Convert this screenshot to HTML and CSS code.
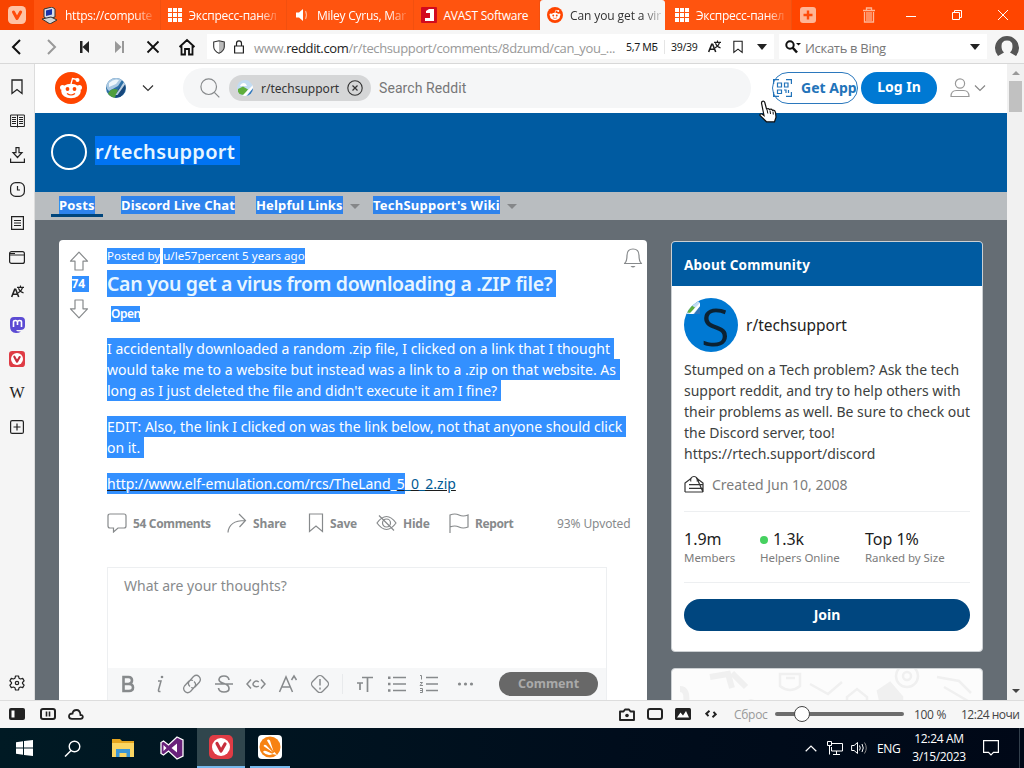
FILE: index.html
```
<!DOCTYPE html>
<html lang="en">
<head>
    <meta charset="utf-8" />
    <title>Can you get a virus from downloading a .ZIP file?</title>
    <link rel="stylesheet" href="styles.css">
</head>
<body>

<svg class="defs" width="0" height="0">
    <symbol id="grid" viewBox="0 0 14 14">
        <path d="M0 0h4v4H0zM5 0h4v4H5zM10 0h4v4h-4zM0 5h4v4H0zM5 5h4v4H5zM10 5h4v4h-4zM0 10h4v4H0zM5 10h4v4H5zM10 10h4v4h-4z" fill="#fff"/>
    </symbol>
    <symbol id="snoo" viewBox="0 0 32 32">
        <circle cx="16" cy="16" r="16" fill="#ff4500"/>
        <path d="M16 12l1.500-5.500 5 1" fill="none" stroke="#fff" stroke-width="1.300"/>
        <circle cx="22.500" cy="8" r="2" fill="#fff"/>
        <circle cx="7.500" cy="15.500" r="2.500" fill="#fff"/>
        <circle cx="24.500" cy="15.500" r="2.500" fill="#fff"/>
        <ellipse cx="16" cy="19" rx="9.800" ry="7.300" fill="#fff"/>
        <circle cx="12.500" cy="17" r="1.900" fill="#ff4500"/>
        <circle cx="19.500" cy="17" r="1.900" fill="#ff4500"/>
        <path d="M12 21.500q4 3 8 0" fill="none" stroke="#ff4500" stroke-width="1.200"/>
    </symbol>
    <symbol id="globe" viewBox="0 0 20 20">
        <circle cx="10" cy="10" r="10" fill="#2c6fa6"/>
        <path d="M.5 7A10 10 0 0 1 16 2L12 8 3 13Q0 11 .5 7z" fill="#a9c8e2"/>
        <path d="M3 5q5-5 10-3l-3 4-7 3z" fill="#eef6fb"/>
        <path d="M2 15.500Q6 9 12 12l-3 7.800Q4 19 2 15.500z" fill="#4f9e3d"/>
        <path d="M19 6q2 8-5 13l-5 .8L13 10z" fill="#17477c"/>
        <path d="M9.500 17L18 4l1 2.500L11.500 17z" fill="#e3eff8" opacity=".8"/>
    </symbol>
    <symbol id="broken" viewBox="0 0 16 16">
        <path d="M0 0h11l5 5v11H0z" fill="#c3dcf2"/>
        <path d="M3 6q1-3 4-3 2 0 3 3z" fill="#fff"/>
        <path d="M1 14V9l5-2.500 5 3L7 15z" fill="#5fae3c"/>
        <path d="M10 16l6-8v8z" fill="#2f76ba"/>
        <path d="M5 16L16 5v3L9 16z" fill="#fff"/>
    </symbol>
    <symbol id="translate" viewBox="0 0 14 14">
        <path d="M.7 13L4 4.500h1L8.300 13M2 10h5" fill="none" stroke="currentColor" stroke-width="1.700"/>
        <path d="M6.500 2.500H14M10.200.5v2M7.500 8.500Q11.500 6.500 12.500 2.500M8 3.500q1.500 4 5.500 5" fill="none" stroke="currentColor" stroke-width="1.200"/>
    </symbol>
    <symbol id="bookmark" viewBox="0 0 12 16">
        <path d="M1 1h10v13.500L6 10.500l-5 4z" fill="none" stroke="currentColor" stroke-width="1.300"/>
    </symbol>
    <symbol id="vivaldi" viewBox="0 0 24 24">
        <rect width="24" height="24" rx="5" fill="#df3c45"/>
        <circle cx="12" cy="12" r="9" fill="#fff"/>
        <path d="M8 8.500l4 7.500 4-7" fill="none" stroke="#c72e3c" stroke-width="3.200" stroke-linecap="round" stroke-linejoin="round"/>
    </symbol>
    <symbol id="chevron" viewBox="0 0 12 8">
        <path d="M1 1.500l5 5 5-5" fill="none" stroke="currentColor" stroke-width="1.200"/>
    </symbol>
    <symbol id="vote" viewBox="0 0 20 20">
        <path d="M10 1.200l8.500 9H14V19H6v-8.800H1.500z" fill="none" stroke="currentColor" stroke-width="1.200" stroke-linejoin="round"/>
    </symbol>
</svg>

<!-- browser tabs -->
<div class="tabbar">
    <div class="menu-btn">
        <svg width="18" height="18" viewBox="0 0 18 18"><rect width="18" height="18" rx="4.500" fill="#ffc3a4"/><path d="M5.500 6L9 12.500 12.600 6" fill="none" stroke="#ff4b0a" stroke-width="3" stroke-linecap="round" stroke-linejoin="round"/></svg>
    </div>
    <div class="tab">
        <svg width="17" height="17" viewBox="0 0 17 17"><path d="M3 2l8-2 3 2v8l-8 2-3-2z" fill="#d9dce8" stroke="#333" /><path d="M5 3.500l6-1.500v5.500L5 9z" fill="#1b33a8"/><path d="M1 12l9-2 6 3-7 4z" fill="#d5d5d5" stroke="#333"/></svg>
        <span>https://compute</span>
    </div>
    <div class="tab">
        <svg width="14" height="14"><use href="#grid"/></svg>
        <span>Экспресс-панел</span>
    </div>
    <div class="tab tab-audio">
        <svg width="14" height="14" viewBox="0 0 14 14"><path d="M1 4.500h3L8 1v12L4 9.500H1z" fill="#fff"/><path d="M10.500 3q2 4 0 8" fill="none" stroke="#ffb090" stroke-width="1.200"/></svg>
        <span>Miley Cyrus, Mar</span>
    </div>
    <div class="tab">
        <svg width="16" height="16" viewBox="0 0 16 16"><rect width="16" height="16" rx="1" fill="#d20a1e"/><path d="M5 4l3-2h5v12H9V6H5z" fill="#fff"/><path d="M4 11h6v3H4z" fill="#fff"/></svg>
        <span class="full">AVAST Software</span>
    </div>
    <div class="tab active">
        <svg width="16" height="16"><use href="#snoo"/></svg>
        <span>Can you get a vir</span>
    </div>
    <div class="tab tab-last">
        <svg width="14" height="14"><use href="#grid"/></svg>
        <span>Экспресс-панел</span>
    </div>
    <svg class="newtab" width="16" height="16" viewBox="0 0 16 16"><rect width="16" height="16" rx="3" fill="#ffb696"/><path d="M8 3.500v9M3.500 8h9" stroke="#ff4b0a" stroke-width="2.400"/></svg>
    <svg class="trash" width="14" height="16" viewBox="0 0 14 16"><path d="M1 3.500h12M4.500 3V1h5v2M2.500 5v10h9V5M5 5v9M7 5v9M9 5v9" fill="none" stroke="#ffb696" stroke-width="1.300"/></svg>
    <svg class="win-min" width="10" height="10" viewBox="0 0 10 10"><path d="M0 6.500h10" stroke="#fff"/></svg>
    <svg class="win-max" width="10" height="10" viewBox="0 0 10 10"><path d="M.5 2.500h7v7h-7zM2.500 2V.5h7v7H8" fill="none" stroke="#fff"/></svg>
    <svg class="win-close" width="10" height="10" viewBox="0 0 10 10"><path d="M0 0l10 10M10 0L0 10" stroke="#fff"/></svg>
</div>

<!-- address bar -->
<div class="toolbar">
    <div class="nav">
        <svg width="20" height="18" viewBox="0 0 20 18"><path d="M13 2L6 9l7 7" fill="none" stroke="#111" stroke-width="2"/></svg>
        <svg width="20" height="18" viewBox="0 0 20 18"><path d="M7 2l7 7-7 7" fill="none" stroke="#999" stroke-width="2"/></svg>
        <svg width="20" height="18" viewBox="0 0 20 18"><path d="M5 3h2.500v12H5zM14 3v12L7.500 9z" fill="#222"/></svg>
        <svg width="20" height="18" viewBox="0 0 20 18"><path d="M13 3h2v12h-2zM6 3v12l6.500-6z" fill="#999"/></svg>
        <svg width="20" height="18" viewBox="0 0 20 18"><path d="M4.500 3.500l11 11M15.500 3.500l-11 11" stroke="#111" stroke-width="1.800"/></svg>
        <svg width="20" height="18" viewBox="0 0 20 18"><path d="M2.500 9L10 2l7.500 7M4.500 8v8.500H8V11h4v5.500h3.500V8" fill="none" stroke="#111" stroke-width="1.800"/></svg>
    </div>
    <div class="url-field">
        <svg width="12" height="14" viewBox="0 0 12 14"><path d="M6 1v12q4-2 5-5V2.500z" fill="#bbb"/><path d="M.7 2L6 .7 11.300 2v5Q11 11 6 13.300 1 11 .7 7z" fill="none" stroke="#333" stroke-width="1.100"/></svg>
        <svg class="lock" width="10" height="14" viewBox="0 0 10 14"><path d="M.6 6h8.800v7H.6zM2.500 6V3.500q0-2.700 2.500-2.700T7.500 3.500V6" fill="none" stroke="#222" stroke-width="1.200"/></svg>
        <span class="url">www.<b>reddit.com</b>/r/techsupport/comments/8dzumd/can_you_...</span>
        <span class="size">5,7 МБ</span>
        <span class="count">39/39</span>
        <svg class="tr" width="13" height="13"><use href="#translate"/></svg>
        <svg class="bm" width="10" height="14"><use href="#bookmark"/></svg>
        <i class="caret"></i>
    </div>
    <div class="bing">
        <svg width="16" height="14" viewBox="0 0 16 14"><circle cx="5" cy="5" r="3.700" fill="none" stroke="#111" stroke-width="2"/><path d="M7.500 7.500l4.500 5" stroke="#111" stroke-width="2.600"/><path d="M11 3h5l-2.500 2.500z" fill="#111"/></svg>
        <span>Искать в Bing</span>
        <i class="caret"></i>
    </div>
    <svg class="profile" width="24" height="22" viewBox="0 0 24 22"><path d="M3 20A12 12 0 1 1 21 20L15 16.500q2.500-2 2.500-6.500 0-5.500-5.500-5.500T6.500 10q0 4.500 2.500 6.500z" fill="#555"/></svg>
</div>

<div class="main">
    <!-- side panel -->
    <div class="panel">
        <svg width="12" height="16"><use href="#bookmark"/></svg>
        <svg width="15" height="14" viewBox="0 0 15 14"><path d="M.6 1h13.800v11.500H.6zM7.500 1v12.500M2 3.500h4M2 5.500h4M2 7.500h4M2 9.500h4M9 3.500h4M9 5.500h4M9 7.500h4M9 9.500h4" fill="none" stroke="#222"/></svg>
        <svg width="15" height="16" viewBox="0 0 15 16"><path d="M6 .6h3v5h3L7.500 10.500 3 5.600h3zM.6 11.500v3.900h13.800v-3.900" fill="none" stroke="#222" stroke-width="1.200"/></svg>
        <svg width="15" height="15" viewBox="0 0 15 15"><rect x=".6" y=".6" width="13.800" height="13.800" rx="5" fill="none" stroke="#222" stroke-width="1.200"/><path d="M7.500 4v4H10" fill="none" stroke="#222" stroke-width="1.200"/></svg>
        <svg width="13" height="14" viewBox="0 0 13 14"><path d="M.6.6h11.800v12.800H.6zM3 4.500h7M3 7h7M3 9.500h7" fill="none" stroke="#222" stroke-width="1.200"/></svg>
        <svg width="16" height="13" viewBox="0 0 16 13"><rect x=".6" y=".6" width="14.800" height="11.800" rx="2" fill="none" stroke="#222" stroke-width="1.200"/><path d="M1 4h14M1 2.500h5" stroke="#222" stroke-width="1.200"/></svg>
        <svg width="13" height="13"><use href="#translate"/></svg>
        <svg width="15" height="16" viewBox="0 0 15 16"><path d="M4 0h7q4 0 4 4v5q0 4-5 4H6q1 2 5 1.500Q9 16 6 16 0 16 0 9V4q0-4 4-4z" fill="#5c4bd3"/><path d="M3.500 10V5q0-1.500 2-1.500t2 2V8M7.500 8V5.500q0-2 2-2t2 1.500v5" fill="none" stroke="#fff" stroke-width="1.600"/></svg>
        <svg width="16" height="16"><use href="#vivaldi"/></svg>
        <span class="wiki">W</span>
        <svg width="14" height="14" viewBox="0 0 14 14"><rect x=".6" y=".6" width="12.800" height="12.800" rx="1.500" fill="none" stroke="#222" stroke-width="1.200"/><path d="M7 3.500v7M3.500 7h7" stroke="#222" stroke-width="1.200"/></svg>
        <svg class="gear" width="16" height="16" viewBox="0 0 16 16"><path d="M6.500 1h3l.5 2.200 1.500.8 2.200-.6 1.400 2.500L13.500 7.500v1l1.600 1.600-1.400 2.500-2.200-.6-1.500.8-.5 2.200h-3L6 12.800 4.500 12l-2.200.6-1.400-2.500 1.600-1.600v-1L.9 5.900l1.400-2.500 2.200.6L6 3.200z" fill="none" stroke="#222" stroke-width="1.200" stroke-linejoin="round"/><circle cx="8" cy="8" r="1.700" fill="none" stroke="#222" stroke-width="1.200"/></svg>
    </div>

    <div class="page">
        <header class="site-header">
            <svg class="logo" width="32" height="32"><use href="#snoo"/></svg>
            <svg class="community" width="20" height="20"><use href="#globe"/></svg>
            <svg class="chev" width="12" height="8"><use href="#chevron"/></svg>
            <div class="search">
                <svg width="20" height="20" viewBox="0 0 20 20"><circle cx="8.700" cy="8.700" r="7.800" fill="none" stroke="#878a8c" stroke-width="1.200"/><path d="M14.300 14.300l5 5" stroke="#878a8c" stroke-width="1.200"/></svg>
                <div class="chip">
                    <svg width="16" height="16"><use href="#broken"/></svg>
                    <span>r/techsupport</span>
                    <svg width="16" height="16" viewBox="0 0 16 16"><circle cx="8" cy="8" r="7.200" fill="none" stroke="#333" stroke-width="1.100"/><path d="M5.500 5.500l5 5M10.500 5.500l-5 5" stroke="#333" stroke-width="1.200"/></svg>
                </div>
                <span class="placeholder">Search Reddit</span>
            </div>
            <div class="get-app">
                <svg width="19" height="18" viewBox="0 0 19 18"><path d="M.6 5V.6H6M13 .6h5.400V5M18.400 13v4.400H13M6 17.400H.6V13M4.500 4h4v4h-4zM11.500 4h3.500v4h-3.500zM4.500 11h4v3.500h-4zM11 11h2v3M15.500 11v3" fill="none" stroke="#2273b9" stroke-width="1.200"/></svg>
                <span>Get App</span>
            </div>
            <div class="login">Log In</div>
            <svg class="user" width="20" height="20" viewBox="0 0 20 20"><circle cx="10" cy="5.500" r="4.600" fill="none" stroke="#999" stroke-width="1.200"/><path d="M1 18.500q0-6 5.500-6h7q5.500 0 5.500 6z" fill="none" stroke="#999" stroke-width="1.200"/></svg>
            <svg class="user-chev" width="12" height="8"><use href="#chevron"/></svg>
        </header>

        <div class="banner">
            <div class="ring"></div>
            <h1>r/techsupport</h1>
        </div>

        <nav class="sub-nav">
            <a class="current"><span class="sel n1">Posts</span></a>
            <a><span class="sel n2">Discord Live Chat</span></a>
            <a class="drop"><span class="sel n3">Helpful Links</span><i></i></a>
            <a class="drop"><span class="sel n4">TechSupport's Wiki</span><i></i></a>
        </nav>

        <div class="content">
            <div class="post">
                <div class="votes">
                    <svg width="20" height="20"><use href="#vote"/></svg>
                    <span class="sel">74</span>
                    <svg class="down" width="20" height="20"><use href="#vote"/></svg>
                </div>
                <div class="post-body">
                    <div class="meta"><span class="sel">Posted by</span><span class="sel">u/le57percent 5 years ago</span></div>
                    <h2><span class="sel">Can you get a virus from downloading a .ZIP file?</span></h2>
                    <div class="flair"><span class="sel">Open</span></div>
                    <p>
                        <span class="sel line">I accidentally downloaded a random .zip file, I clicked on a link that I thought</span>
                        <span class="sel line">would take me to a website but instead was a link to a .zip on that website. As</span>
                        <span class="sel line">long as I just deleted the file and didn't execute it am I fine?</span>
                    </p>
                    <p>
                        <span class="sel line">EDIT: Also, the link I clicked on was the link below, not that anyone should click</span>
                        <span class="sel line">on it.</span>
                    </p>
                    <p class="link"><span class="sel">http://www.elf-emulation.com/rcs/TheLand_5</span><span class="rest">_0_2.zip</span></p>
                    <div class="actions">
                        <svg width="20" height="20" viewBox="0 0 20 20"><path d="M3 1h14q2 0 2 2v10q0 2-2 2h-6l-4.500 4V15H3q-2 0-2-2V3q0-2 2-2z" fill="none" stroke="#878a8c" stroke-width="1.200"/></svg>
                        <span class="a1">54 Comments</span>
                        <svg width="20" height="20" viewBox="0 0 20 20"><path d="M1 19.500Q2 7.500 18 7.500M12 1l6.500 6.500L12.500 14" fill="none" stroke="#878a8c" stroke-width="1.200"/></svg>
                        <span class="a2">Share</span>
                        <svg width="16" height="20" viewBox="0 0 16 20"><path d="M1.500 1h13v17.500L8 13l-6.500 5.500z" fill="none" stroke="#878a8c" stroke-width="1.200"/></svg>
                        <span class="a3">Save</span>
                        <svg width="21" height="18" viewBox="0 0 21 18"><path d="M1 9q9.500-13 19 0-9.500 13-19 0zM3 1.500l15 15" fill="none" stroke="#878a8c" stroke-width="1.200"/><circle cx="10.500" cy="9" r="4" fill="none" stroke="#878a8c" stroke-width="1.200"/></svg>
                        <span class="a4">Hide</span>
                        <svg width="20" height="20" viewBox="0 0 20 20"><path d="M1 20V2q5-2 9 0t9 0v12q-5 2-9 0t-9 0" fill="none" stroke="#878a8c" stroke-width="1.200"/></svg>
                        <span class="a5">Report</span>
                        <span class="upvoted">93% Upvoted</span>
                    </div>
                    <div class="editor">
                        <div class="editor-text">What are your thoughts?</div>
                        <div class="editor-bar">
                            <svg width="20" height="20" viewBox="0 0 20 20"><path d="M5.500 3h5q3.500 0 3.500 3.300T10.500 10h-5zM5.500 10H11q4 0 4 3.500T11 17H5.500z" fill="none" stroke="#878a8c" stroke-width="2.600"/></svg>
                            <svg width="20" height="20" viewBox="0 0 20 20"><path d="M8 7h3l-2.500 9q-.5 2 2 1.500" fill="none" stroke="#878a8c" stroke-width="1.500"/><circle cx="12" cy="3" r="1.300" fill="#878a8c"/></svg>
                            <svg width="20" height="20" viewBox="0 0 20 20"><path d="M8 12.500Q5 10 7.500 7l4-4.500q3-2.500 5.500 0t.5 5.500L13 13q-2 1.500-4 .5M12 7.500q3 2.500.5 5.500l-4 4.500q-3 2.500-5.500 0T2.500 12L7 7q2-1.500 4-.5" fill="none" stroke="#878a8c" stroke-width="1.300"/></svg>
                            <svg width="20" height="20" viewBox="0 0 20 20"><path d="M15 6q-.5-4-5-4T5 5.500Q5 8 10 9.500t5 5Q15 18 10 18t-5.500-4M1 10h18" fill="none" stroke="#878a8c" stroke-width="1.700"/></svg>
                            <svg width="20" height="20" viewBox="0 0 20 20"><path d="M5 5.500L1 10l4 4.500M15 5.500l4 4.500-4 4.500M12.800 8Q10 6 8 8.200t0 3.700 4.800.2" fill="none" stroke="#878a8c" stroke-width="1.500"/></svg>
                            <svg width="20" height="20" viewBox="0 0 20 20"><path d="M1.500 18L8 3l6.500 15M4 13h8M13.500 6L16 2l2.500 4" fill="none" stroke="#878a8c" stroke-width="1.500"/></svg>
                            <svg width="20" height="20" viewBox="0 0 20 20"><rect x="3" y="3" width="14" height="14" rx="3.500" transform="rotate(45 10 10)" fill="none" stroke="#878a8c" stroke-width="1.300"/><path d="M10 5v6.500M10 13.500v2" stroke="#878a8c" stroke-width="1.500"/></svg>
                            <i class="sep"></i>
                            <svg width="20" height="20" viewBox="0 0 20 20"><path d="M7 3.500h11M12.500 3.500V18M2 9h6M5 9v7" fill="none" stroke="#878a8c" stroke-width="1.700"/></svg>
                            <svg width="20" height="20" viewBox="0 0 20 20"><path d="M6 3.500h13M6 10h13M6 16.500h13" stroke="#878a8c" stroke-width="1.500"/><path d="M1 2.500h2.500v2.500H1zM1 8.800h2.500v2.500H1zM1 15.200h2.500v2.500H1z" fill="#878a8c"/></svg>
                            <svg width="20" height="20" viewBox="0 0 20 20"><path d="M7 3.500h12M7 10h12M7 16.500h12" stroke="#878a8c" stroke-width="1.500"/><path d="M1 1.500h1.500v4M1 8.500h2.500L1 11.500h3M1 14.500h2.500v4H1M1 16.500h2.500" fill="none" stroke="#878a8c"/></svg>
                            <svg class="dots" width="18" height="20" viewBox="0 0 18 20"><circle cx="2.500" cy="10" r="1.600" fill="#878a8c"/><circle cx="8.500" cy="10" r="1.600" fill="#878a8c"/><circle cx="14.500" cy="10" r="1.600" fill="#878a8c"/></svg>
                            <span class="comment-btn">Comment</span>
                        </div>
                    </div>
                </div>
                <svg class="bell" width="20" height="20" viewBox="0 0 20 20"><path d="M1.500 15.500q2.500-2 2.500-8Q4 1 10 1t6 6.500q0 6 2.500 8z" fill="none" stroke="#878a8c" stroke-width="1.200" stroke-linejoin="round"/><path d="M7.500 18h5q-2.500 3-5 0z" fill="#878a8c"/></svg>
            </div>

            <aside>
                <div class="about">
                    <div class="about-title">About Community</div>
                    <div class="about-body">
                        <div class="about-name">
                            <div class="avatar"><svg width="16" height="16"><use href="#broken"/></svg><span>S</span></div>
                            <span class="r-name">r/techsupport</span>
                        </div>
                        <div class="desc">Stumped on a Tech problem? Ask the tech<br>support reddit, and try to help others with<br>their problems as well. Be sure to check out<br>the Discord server, too!<br>https://rtech.support/discord</div>
                        <div class="created">
                            <svg width="20" height="18" viewBox="0 0 20 18"><path d="M1 17V8l6-4.500M13 3.500L19 8v9zM1 17h18M5 9.700h14M5 13.300h14" fill="none" stroke="#333" stroke-width="1.200"/><path d="M7 6.500A3.400 3.400 0 1 1 13 6.500" fill="none" stroke="#333" stroke-width="1.100"/></svg>
                            <span>Created Jun 10, 2008</span>
                        </div>
                        <div class="stats">
                            <div><b>1.9m</b><small>Members</small></div>
                            <div><b><i></i>1.3k</b><small>Helpers Online</small></div>
                            <div><b>Top 1%</b><small>Ranked by Size</small></div>
                        </div>
                        <div class="join">Join</div>
                    </div>
                </div>
                <div class="promo">
                    <svg width="310" height="40" viewBox="0 0 310 40" fill="none" stroke="#f0f0f0" stroke-width="2.500">
                        <path d="M38 8l18-3 4 14M60 4l14 14M8 20q8 0 6 14" stroke-width="6"/>
                        <path d="M108 5h20v12q-10 8-20 0zM114 9h9"/>
                        <path d="M138 15l18 10 14-12M175 38V28l10-8 10 8v10"/>
                        <path d="M206 22l12-8 12 14v12h-20z" fill="#f0f0f0"/>
                        <circle cx="235" cy="7" r="11"/><circle cx="235" cy="7" r="4"/>
                        <path d="M265 8l22 4 12 12M272 18l24 14M72 38q6-12 14-2"/>
                    </svg>
                </div>
            </aside>
        </div>
    </div>

    <div class="scrollbar">
        <i class="up"></i>
        <div class="thumb"></div>
        <i class="dn"></i>
    </div>
</div>

<div class="statusbar">
    <svg width="16" height="12" viewBox="0 0 16 12"><rect width="16" height="12" rx="2" fill="#222"/><path d="M2.500 2.500h3v7h-3z" fill="#fff"/></svg>
    <svg class="st2" width="16" height="12" viewBox="0 0 16 12"><rect x="1" y="1" width="14" height="10" rx="2" fill="none" stroke="#222" stroke-width="2"/><path d="M6.500 3.500v5M9.500 3.500v5" stroke="#222" stroke-width="1.600"/></svg>
    <svg class="st3" width="16" height="11" viewBox="0 0 16 11"><path d="M4 9.800h8.500q2.300 0 2.300-2T12.500 6Q12 1 8.500 1T4.500 4.500Q1 4.500 1 7.200 1 9.800 4 9.800z" fill="none" stroke="#222" stroke-width="1.800"/></svg>
    <svg class="st4" width="16" height="13" viewBox="0 0 16 13"><path d="M1 3.500h3.500L6 1.500h4l1.500 2H15V12H1z" fill="none" stroke="#222" stroke-width="1.900" stroke-linejoin="round"/><circle cx="8" cy="7.500" r="1.800" fill="#222"/></svg>
    <svg class="st5" width="16" height="12" viewBox="0 0 16 12"><rect x="1" y="1" width="14" height="10" rx="2" fill="none" stroke="#222" stroke-width="2"/></svg>
    <svg class="st5" width="16" height="12" viewBox="0 0 16 12"><rect width="16" height="12" rx="1.500" fill="#222"/><path d="M2 9.500l3.500-5 2.500 3L11 3l3 6.500z" fill="#fff"/></svg>
    <svg class="st6" width="12" height="8" viewBox="0 0 12 8"><path d="M4.500.7L1.300 3.700l2.200 2.400M7.500 7.300l3.200-3L8.500 1.900" fill="none" stroke="#222" stroke-width="1.900"/></svg>
    <span class="reset">Сброс</span>
    <div class="zoom"><i></i></div>
    <span class="pct">100 %</span>
    <span class="clock">12:24 ночи</span>
</div>

<div class="taskbar">
    <div class="task"><svg width="17" height="16" viewBox="0 0 17 16"><path d="M0 2.300L7 1.300v6.200H0zM8 1.100L17 0v7.500H8zM0 8.500h7v6.200l-7-1zM8 8.500h9V16l-9-1.100z" fill="#fff"/></svg></div>
    <div class="task find"><svg width="17" height="17" viewBox="0 0 17 17"><circle cx="10.500" cy="6.500" r="5.300" fill="none" stroke="#fff" stroke-width="1.400"/><path d="M7 10.500L1 16.500" stroke="#fff" stroke-width="1.500"/></svg></div>
    <div class="task"><svg width="22" height="18" viewBox="0 0 22 18"><path d="M0 0h8l2 2h12v16H0z" fill="#e5a51f"/><path d="M0 4h22v14H0z" fill="#fbd562"/><path d="M4 18v-8h14v8h-3.500v-4h-7v4z" fill="#3b96d6"/></svg></div>
    <div class="task"><svg width="24" height="24" viewBox="0 0 24 24"><path d="M17 1l6 3v16l-6 3-8.500-8L3.500 19 1 17.500v-11L3.500 5l5 4z" fill="#68217a" stroke="#fff" stroke-width="1.300"/><path d="M17 7.500v9L11.500 12zM3.500 9v6l3-3z" fill="#fff"/></svg></div>
    <div class="task on"><svg width="24" height="24"><use href="#vivaldi"/></svg></div>
    <div class="task open"><svg width="24" height="24" viewBox="0 0 24 24"><rect width="24" height="24" rx="4" fill="#fff"/><circle cx="12" cy="12" r="10.500" fill="#f78212"/><path d="M9 5.500q1-2 3 0l3.500 11zM5.500 11q1-2 3-.5l6.500 7zM5 17q1-2 3-1l7 3q-6 2.500-10-2z" fill="#fff"/><path d="M16.500 17l2.500 3-5-1z" fill="#fff"/></svg></div>
    <svg class="tray-up" width="12" height="7" viewBox="0 0 12 7"><path d="M.7 6.200L6 1l5.300 5.200" fill="none" stroke="#fff" stroke-width="1.200"/></svg>
    <svg class="net" width="16" height="14" viewBox="0 0 16 14"><path d="M5 2.500h10.500V10H4.500V6M9.500 10v3M6 13.500h7M.5.500h4v4h-4zM2.500 5v8.500" fill="none" stroke="#fff"/></svg>
    <svg class="vol" width="17" height="14" viewBox="0 0 17 14"><path d="M.6 4.500h2.500L6.500 1.500v11L3.100 9.500H.6z" fill="none" stroke="#fff"/><path d="M8.500 4.500q1.500 2.500 0 5M11 3q2.500 4 0 8" fill="none" stroke="#fff"/><path d="M13.500 1.500q3.500 5.500 0 11" fill="none" stroke="#888"/></svg>
    <span class="lang">ENG</span>
    <div class="datetime"><span>12:24 AM</span><span>3/15/2023</span></div>
    <svg class="notif" width="16" height="16" viewBox="0 0 16 16"><path d="M.6.6h14.800v11.800H10.500L8 15l-2.500-2.600H.6z" fill="none" stroke="#fff" stroke-width="1.200"/></svg>
    <i class="desktop"></i>
</div>

<!-- mouse pointer -->
<svg class="cursor" width="19" height="24" viewBox="0 0 19 24"><path d="M4 1.500q2-1 2.800 1L8.500 9q2-1 3 .5 2-.8 3 .8 2.500-.5 3 2l.5 5-1.500 4.500H8.500L2 15.500q-.5-2 2-1.500l2 1.500L3.500 3z" fill="#fff" stroke="#111" stroke-width="1.200"/><path d="M9 9.500l.8 4M12 10.500l.5 3.500M15 11.500l.3 3" stroke="#111"/></svg>

</body>
</html>
```
FILE: styles.css
```
* {
    margin: 0;
    padding: 0;
    box-sizing: border-box;
}

body {
    font-family: "Noto Sans", "Open Sans", sans-serif;
    width: 1024px;
    height: 768px;
    overflow: hidden;
    display: flex;
    flex-direction: column;
    white-space: nowrap;
    color: #1c1c1c;
}

svg {
    flex: none;
    display: block;
}

.defs {
    position: absolute;
}

/* tabs */
.tabbar {
    height: 30px;
    flex: none;
    background: #ff4500;
    display: flex;
    align-items: center;
    font-family: "Open Sans", sans-serif;
    font-size: 12px;
    letter-spacing: -.25px;
    color: #fff;
}

.menu-btn {
    width: 34px;
    height: 30px;
    padding: 6px 8px;
    background: #f84400;
}

.tab {
    width: 126.500px;
    flex: none;
    height: 30px;
    display: flex;
    align-items: center;
    gap: 7px;
    padding-left: 7px;
    background: #ff540f;
    border-right: 1px solid #f2500f;
}

.tab span {
    -webkit-mask-image: linear-gradient(90deg, #000 80%, rgba(0, 0, 0, .2));
    mask-image: linear-gradient(90deg, #000 80%, rgba(0, 0, 0, .2));
}

.tab .full {
    -webkit-mask-image: none;
    mask-image: none;
}

.tab-audio {
    padding-left: 8px;
    gap: 8px;
}

.tab.active {
    width: 125px;
    background: #f6f6f6;
    color: #333;
    border-radius: 3px 3px 0 0;
    border: 0;
    letter-spacing: -.1px;
}

.tab-last {
    padding-left: 10px;
}

.newtab {
    margin-left: 8px;
}

.trash {
    margin-left: 46px;
}

.win-min {
    margin-left: 30px;
}

.win-max {
    margin-left: 36px;
}

.win-close {
    margin-left: 36px;
}

/* address bar */
.toolbar {
    height: 34px;
    flex: none;
    background: #f6f6f6;
    border-bottom: 1px solid #d8d8d8;
    display: flex;
    align-items: center;
}

.nav {
    display: flex;
    gap: 14px;
    padding-left: 7px;
    width: 207px;
}

.url-field {
    width: 567px;
    height: 25px;
    background: #fff;
    display: flex;
    align-items: center;
    padding-left: 6px;
    font-size: 10.500px;
}

.lock {
    margin-left: 9px;
}

.url {
    font-family: "Open Sans", sans-serif;
    font-size: 13px;
    color: #999;
    width: 361px;
    margin-left: 10px;
    margin-top: 2px;
    letter-spacing: -.37px;
}

.url b {
    font-weight: 400;
    color: #222;
}

.size {
    margin-left: 11px;
    width: 38px;
    letter-spacing: -.3px;
}

.count {
    border-left: 1px solid #e5e5e5;
    padding-left: 6px;
    width: 38px;
    letter-spacing: -.3px;
}

.tr {
    margin-left: 6px;
}

.bm {
    margin-left: 12px;
}

.caret {
    border: 5px solid transparent;
    border-top: 6px solid #222;
    border-bottom: 0;
    margin-left: 14px;
}

.bing {
    width: 208px;
    height: 25px;
    margin-left: 5px;
    background: #fff;
    display: flex;
    align-items: center;
    padding: 0 7px 0 6px;
    font-family: "Open Sans", sans-serif;
    font-size: 13px;
    letter-spacing: -.3px;
    color: #777;
}

.bing span {
    margin-left: 4px;
    margin-top: 2px;
}

.bing .caret {
    margin-left: auto;
}

.profile {
    margin-left: 8px;
}

/* main area */
.main {
    height: 636px;
    flex: none;
    display: flex;
}

.panel {
    width: 35px;
    background: #f5f5f5;
    border-right: 1px solid #ddd;
    display: grid;
    grid-template-rows: repeat(11, 34px) 1fr;
    justify-items: center;
    align-items: center;
    padding-top: 6px;
    color: #222;
}

.panel .gear {
    align-self: end;
    margin-bottom: 9px;
}

.wiki {
    font: 16px "Liberation Serif", serif;
}

.page {
    width: 972px;
    overflow: hidden;
    background: #656d74;
}

.site-header {
    height: 49px;
    background: #fff;
    display: flex;
    align-items: center;
    padding: 0 0 1px 20px;
}

.community {
    margin-left: 19px;
}

.chev {
    margin-left: 16px;
    color: #333;
}

.search {
    width: 568px;
    height: 40px;
    margin-left: 29px;
    border-radius: 20px;
    background: #f5f6f7;
    display: flex;
    align-items: center;
    padding-left: 17px;
}

.chip {
    display: flex;
    align-items: center;
    height: 26px;
    width: 142px;
    margin-left: 9px;
    padding: 0 8px;
    border-radius: 13px;
    background: #d5d6d7;
    font-size: 12px;
    color: #333;
}

.chip svg:first-child {
    border-radius: 50%;
}

.chip span {
    margin: 0 8px;
    width: 78px;
}

.placeholder {
    font-family: Roboto, sans-serif;
    font-size: 14px;
    letter-spacing: .08px;
    color: #777;
    margin-left: 8px;
}

.get-app {
    width: 86px;
    height: 32px;
    margin-left: 21px;
    border: 1px solid #2b78bd;
    border-radius: 16px;
    display: flex;
    align-items: center;
    color: #2273b9;
    font-weight: 700;
    font-size: 14px;
}

.get-app span {
    margin: -2px 0 0 9px;
}

.login {
    width: 76px;
    height: 32px;
    line-height: 30px;
    margin-left: 3px;
    border-radius: 16px;
    background: #0079d3;
    color: #fff;
    font-weight: 700;
    font-size: 14px;
    text-align: center;
}

.user {
    margin-left: 13px;
}

.user-chev {
    margin-left: 4px;
    color: #888;
}

.banner {
    height: 79px;
    background: #005ba1;
    display: flex;
    align-items: center;
    padding: 0 0 1px 16px;
}

.ring {
    width: 36px;
    height: 36px;
    border: 2px solid #fff;
    border-radius: 50%;
}

.banner h1 {
    margin-left: 8px;
    margin-top: -3px;
    height: 29px;
    line-height: 31px;
    width: 145px;
    background: #0073f2;
    color: #e8f6ff;
    font-size: 20px;
    font-weight: 600;
    letter-spacing: .32px;
}

.sub-nav {
    height: 28px;
    background: #b9bdc0;
    display: flex;
    padding-left: 16px;
}

.sub-nav a {
    display: flex;
    height: 25px;
    padding: 4px 8px 0;
    margin-right: 10px;
    font-size: 13px;
    font-weight: 700;
}

.sub-nav a.current {
    border-bottom: 3px solid #00457c;
}

.sub-nav .drop {
    margin: 0 4px 0 -5px;
    padding-right: 0;
}

.sub-nav .drop + .drop {
    margin-left: 0;
}

.sub-nav .sel {
    height: 18px;
    line-height: 18px;
    background: #2e83ec;
}

.n1 {
    width: 36px;
    letter-spacing: .15px;
}

.n2 {
    width: 114px;
    letter-spacing: .12px;
}

.n3 {
    width: 87px;
    letter-spacing: .15px;
}

.n4 {
    width: 127px;
    letter-spacing: .23px;
}

.sub-nav i {
    border: 5px solid transparent;
    border-top: 5px solid #858789;
    margin: 8px 1px 0 7px;
    height: 0;
}

.sel {
    background: #3390ff;
    color: #fff;
}

.content {
    display: flex;
    align-items: flex-start;
    padding: 20px 0 0 24px;
    gap: 24px;
}

.post {
    width: 588px;
    height: 500px;
    background: #fff;
    border-radius: 4px 4px 0 0;
    position: relative;
    display: flex;
}

.votes {
    width: 48px;
    padding: 11px 8px 0 0;
    display: flex;
    flex-direction: column;
    align-items: center;
    color: #878a8c;
    margin-left: -1px;
}

.votes svg {
    margin-left: 1px;
}

.votes .sel {
    width: 17px;
    height: 16px;
    line-height: 16px;
    margin: 5px 0 7px 4px;
    font-size: 12px;
    font-weight: 700;
}

.down {
    transform: rotate(180deg);
}

.post-body {
    padding-left: 1px;
}

.bell {
    position: absolute;
    right: 4px;
    top: 8px;
}

.meta {
    margin-top: 8px;
    display: flex;
    gap: 3px;
    height: 16px;
    line-height: 16px;
    font-size: 11.500px;
    letter-spacing: .04px;
}

.post-body h2 {
    margin-top: 6px;
    height: 27px;
    line-height: 27px;
    font-size: 19.500px;
    font-weight: 600;
    letter-spacing: -.35px;
}

h2 .sel {
    display: inline-block;
    width: 449px;
    color: #e8f6ff;
}

.flair {
    margin: 9px 0 16px 4px;
    height: 16px;
    line-height: 16px;
    font-size: 12px;
    font-weight: 600;
    letter-spacing: -.5px;
}

.flair .sel {
    display: block;
    width: 29px;
}

.post-body p {
    font-size: 14px;
    line-height: 21px;
    margin-bottom: 15px;
}

.line {
    display: block;
    width: fit-content;
    padding-right: 4px;
}

p.link {
    display: flex;
    text-decoration: underline;
}

.link .rest {
    color: #005a94;
}

.actions {
    display: flex;
    align-items: center;
    height: 20px;
    margin-top: 19px;
    font-size: 12px;
    font-weight: 700;
    color: #878a8c;
}

.actions span {
    margin-left: 6px;
    flex: none;
}

.a1 {
    width: 94px;
    letter-spacing: -.35px;
}

.a2 {
    width: 55px;
    letter-spacing: -.1px;
}

.a3 {
    width: 46px;
    letter-spacing: -.2px;
}

.a4 {
    width: 46px;
    letter-spacing: -.2px;
}

.actions .a5 {
    width: 76px;
    letter-spacing: -.4px;
}

.actions .upvoted {
    font-weight: 400;
    letter-spacing: -.1px;
}

.editor {
    width: 500px;
    height: 160px;
    margin-top: 34px;
    border: 1px solid #edeff1;
}

.editor-text {
    height: 100px;
    padding: 8px 16px;
    font-size: 14px;
    color: #878a8c;
}

.editor-bar {
    height: 58px;
    padding: 6px 8px 0 10px;
    background: #f6f7f8;
    display: flex;
    gap: 12px;
}

.sep {
    width: 1px;
    height: 20px;
    background: #e8eaec;
}

.dots {
    margin-left: 6px;
}

.comment-btn {
    width: 99px;
    height: 24px;
    line-height: 23px;
    margin: -2px 0 0 auto;
    border-radius: 12px;
    background: #686868;
    color: #aaa;
    font-size: 12.500px;
    font-weight: 700;
    text-align: center;
}

aside {
    width: 312px;
}

.about {
    margin-top: 1px;
    height: 411px;
    border: 1px solid #ccd0d3;
    border-radius: 4px;
    background: #fff;
    overflow: hidden;
}

.about-title {
    height: 44px;
    line-height: 47px;
    background: #005ba1;
    color: #fff;
    padding-left: 12px;
    font-size: 13.500px;
    font-weight: 700;
    letter-spacing: .2px;
}

.about-body {
    padding: 12px;
}

.about-name {
    display: flex;
    align-items: center;
    gap: 8px;
}

.avatar {
    width: 54px;
    height: 54px;
    border-radius: 50%;
    background: #0079d3;
    display: flex;
}

.avatar svg {
    clip-path: circle(27px at 27px 27px);
}

.avatar span {
    font-family: "Open Sans", sans-serif;
    font-size: 52px;
    line-height: 56px;
    margin-left: 1px;
    color: #0b2233;
}

.r-name {
    font-size: 15.500px;
    color: #222;
}

.desc {
    margin-top: 7px;
    font-size: 14px;
    line-height: 21px;
    color: #3d3f40;
}

.created {
    display: flex;
    align-items: center;
    gap: 8px;
    height: 20px;
    margin-top: 10px;
    font-size: 14px;
    color: #7c7c7c;
}

.stats {
    display: grid;
    grid-template-columns: 76px 105px 1fr;
    margin: 17px 0 16px;
    padding: 16px 0;
    height: 72px;
    border-top: 1px solid #edeff1;
    border-bottom: 1px solid #edeff1;
}

.stats b {
    display: flex;
    align-items: center;
    font-size: 16px;
    line-height: 22px;
    font-weight: 400;
}

.stats b i {
    width: 8px;
    height: 8px;
    margin: 2px 5px 0 0;
    border-radius: 50%;
    background: #46d160;
}

.stats small {
    display: block;
    font-size: 11.500px;
    line-height: 16px;
    letter-spacing: -.05px;
    color: #7c7c7c;
}

.join {
    height: 32px;
    line-height: 31px;
    border-radius: 16px;
    background: #00467f;
    color: #fff;
    font-size: 14px;
    font-weight: 700;
    text-align: center;
}

.promo {
    margin-top: 16px;
    height: 60px;
    background: #fcfcfc;
    border: 1px solid #ccd0d3;
    border-radius: 4px 4px 0 0;
    overflow: hidden;
}

.scrollbar {
    width: 17px;
    background: #f1f1f1;
    display: flex;
    flex-direction: column;
    align-items: center;
}

.scrollbar .up {
    border: 4px solid transparent;
    border-top: 0;
    border-bottom: 4px solid #999;
    margin-top: 7px;
}

.thumb {
    width: 13px;
    height: 31px;
    margin-top: 6px;
    background: #c1c1c1;
}

.scrollbar .dn {
    border: 4px solid transparent;
    border-top: 4px solid #444;
    border-bottom: 0;
    margin-top: auto;
    margin-bottom: 7px;
}

/* status bar */
.statusbar {
    height: 28px;
    flex: none;
    background: #f6f6f6;
    border-top: 1px solid #ddd;
    display: flex;
    align-items: center;
    padding: 0 0 1px 9px;
    font-family: "Open Sans", sans-serif;
    font-size: 12px;
    letter-spacing: -.3px;
    color: #444;
}

.st2 {
    margin-left: 15px;
}

.st3 {
    margin-left: 12px;
}

.st4 {
    margin-left: 535px;
}

.st5 {
    margin-left: 12px;
}

.st6 {
    margin-left: 14px;
}

.reset {
    margin-left: 17px;
    width: 32px;
    color: #999;
}

.zoom {
    width: 129px;
    height: 4px;
    margin-left: 9px;
    border-radius: 2px;
    background: #6d6d6d;
}

.zoom i {
    display: block;
    width: 16px;
    height: 16px;
    margin: -6px 0 0 19px;
    border: 1px solid #444;
    border-radius: 50%;
    background: #fff;
}

.pct {
    margin-left: 10px;
    width: 31px;
}

.clock {
    margin-left: 16px;
    letter-spacing: -.5px;
}

/* taskbar */
.taskbar {
    height: 40px;
    flex: none;
    background: linear-gradient(90deg, #001a24, #000d1c 60%, #000817);
    display: flex;
    align-items: center;
    font-family: "Open Sans", sans-serif;
    font-size: 12px;
    letter-spacing: -.35px;
    color: #fff;
}

.task {
    width: 49px;
    height: 40px;
    display: flex;
    align-items: center;
    justify-content: center;
}

.task.find {
    padding-right: 3px;
}

.task.on {
    width: 48px;
    margin-left: 1px;
    background: #30464d;
}

.task.on,
.task.open {
    border-bottom: 2px solid #76b9ed;
}

.task.open {
    width: 40px;
    margin-left: 5px;
}

.tray-up {
    margin-left: 515px;
}

.net {
    margin-left: 10px;
}

.vol {
    margin-left: 8px;
}

.lang {
    margin-left: 9px;
    width: 24px;
}

.datetime {
    width: 54px;
    margin-left: 11px;
    display: flex;
    flex-direction: column;
    align-items: center;
    line-height: 18px;
}

.notif {
    margin-left: 17px;
}

.desktop {
    width: 1px;
    height: 40px;
    margin: 0 4px 0 auto;
    background: #33404c;
}

.cursor {
    position: absolute;
    left: 758px;
    top: 100px;
}
```
